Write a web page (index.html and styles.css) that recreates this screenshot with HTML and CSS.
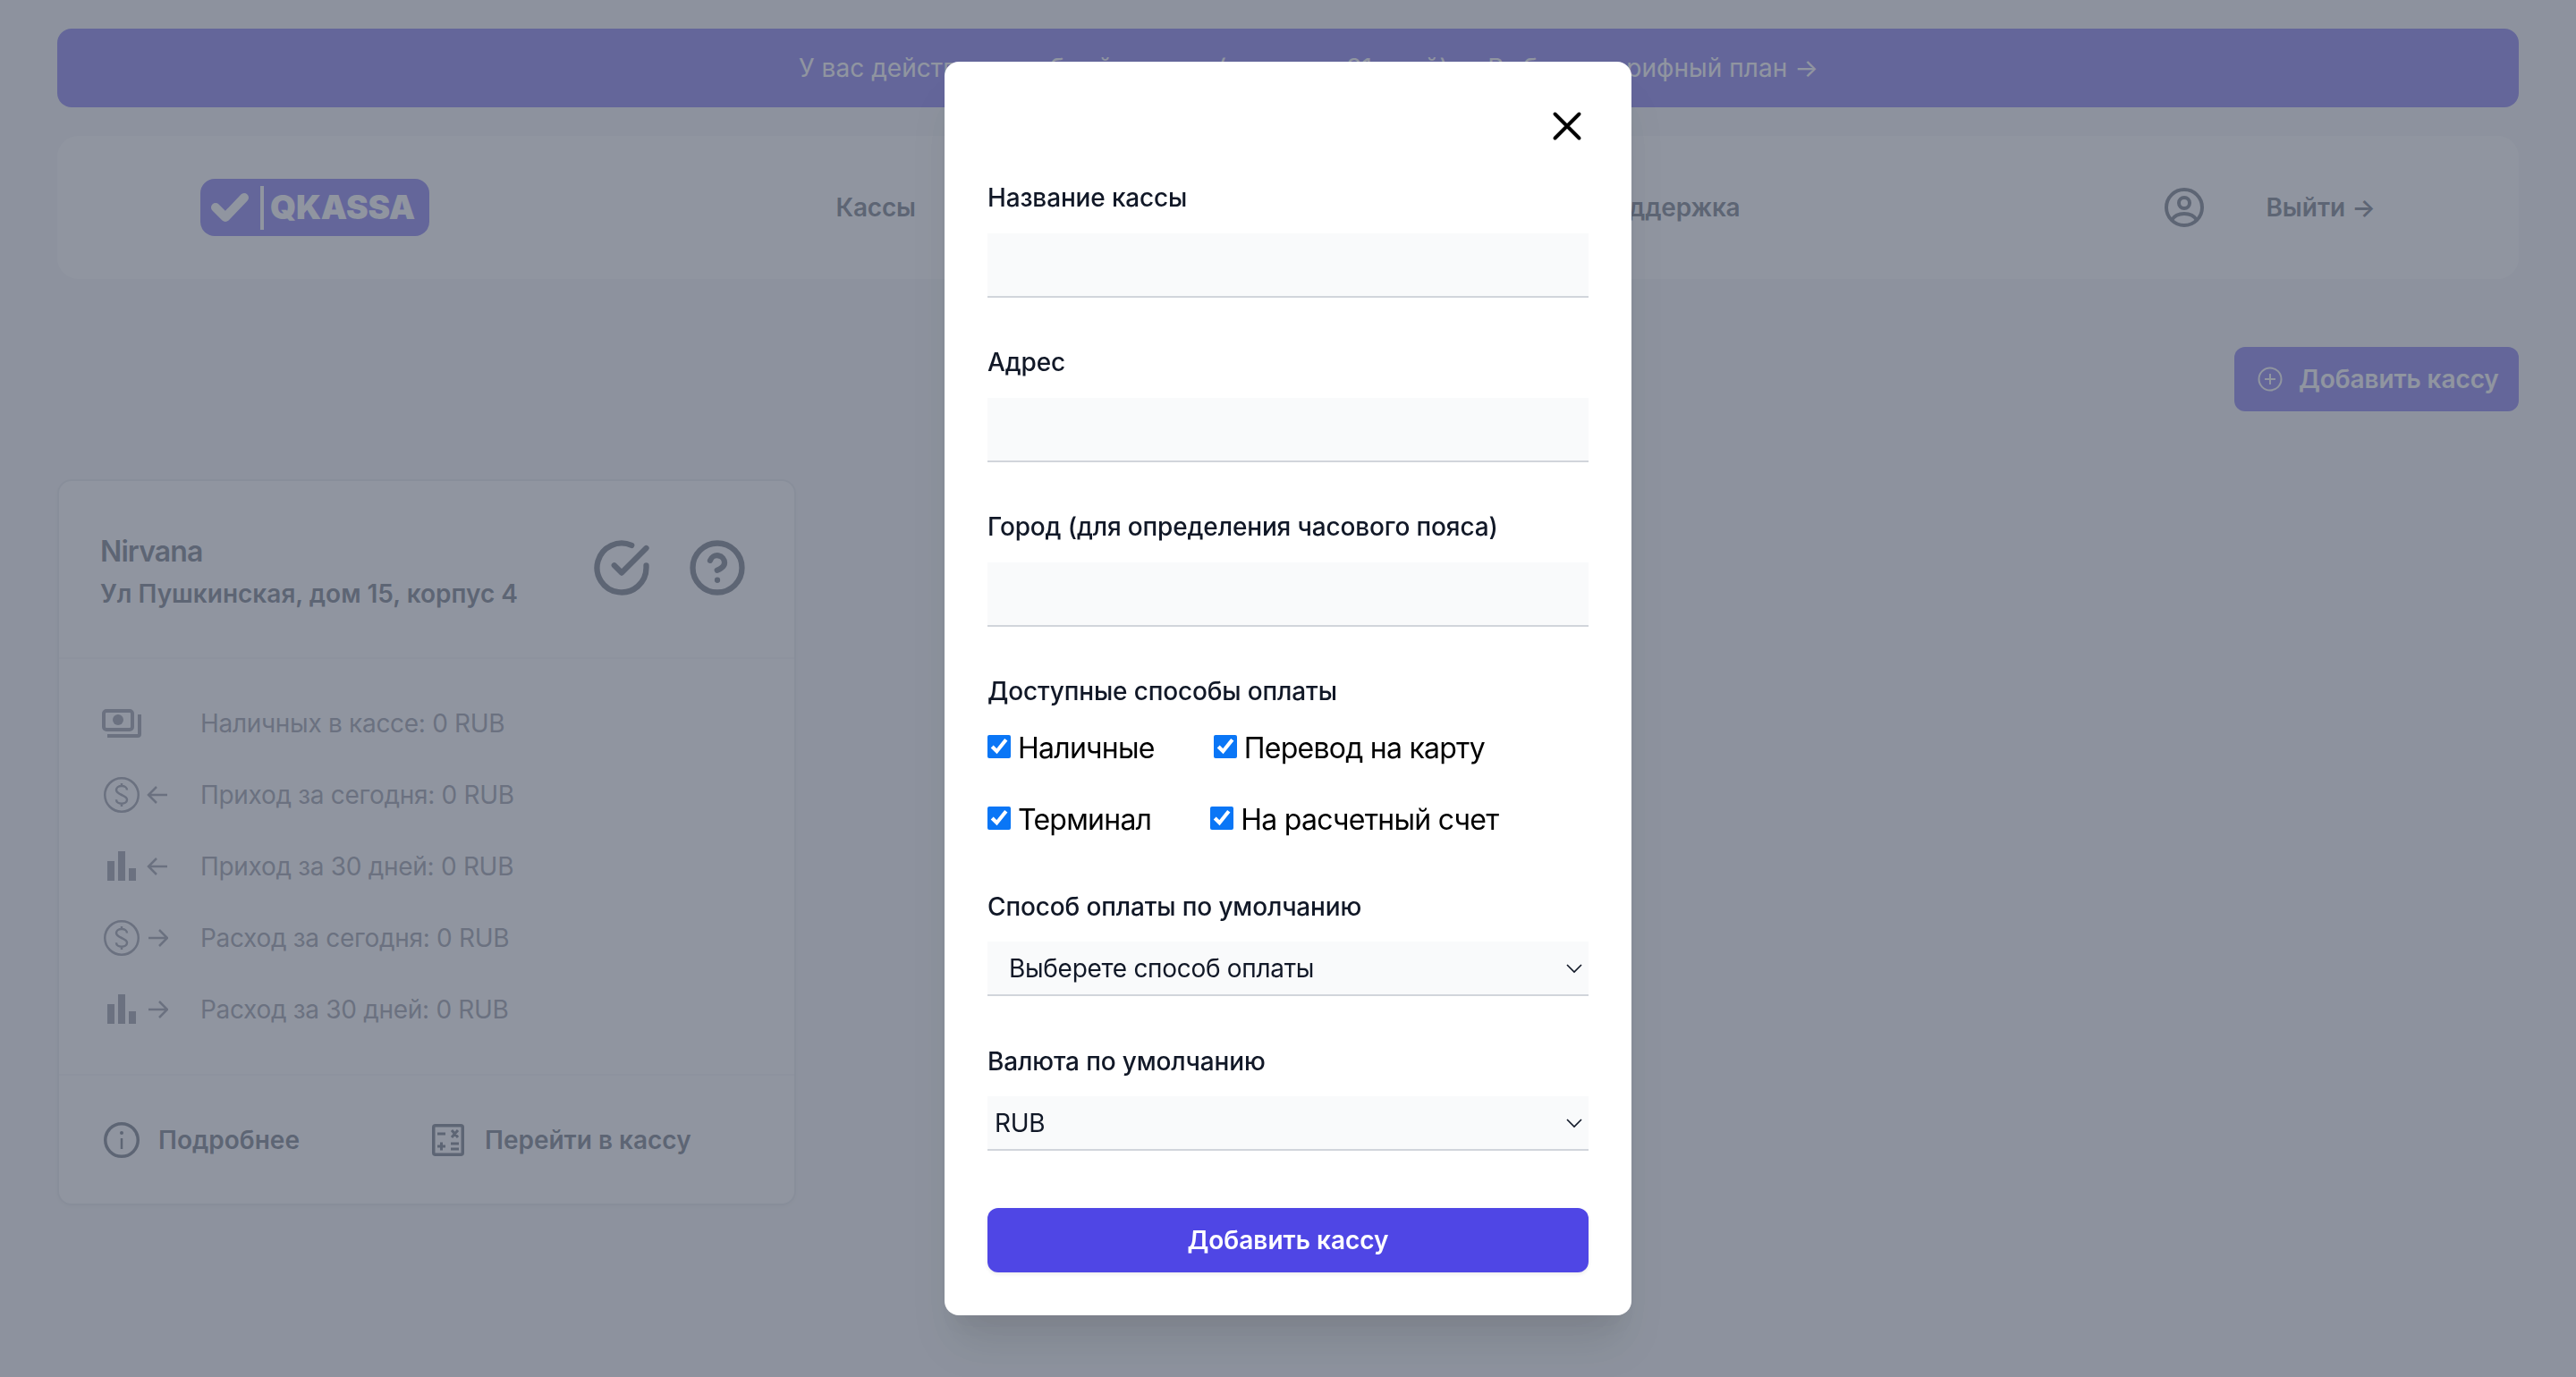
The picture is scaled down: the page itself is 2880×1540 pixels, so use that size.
FILE: index.html
```html
<!DOCTYPE html>
<html lang="ru">
<head>
    <meta charset="UTF-8">
    <meta name="viewport" content="width=device-width, initial-scale=1.0">
    <title>QKASSA</title>
    <link rel="stylesheet" href="styles.css">
</head>
<body>
    <div class="page">
        <div class="banner">У вас действует пробный период (осталось 31 дней) — Выбрать тарифный план →</div>

        <nav class="nav">
            <a class="logo">
                <svg class="logo-check" viewBox="0 0 44 34"><path d="M6 17l11 11L38 6" fill="none" stroke="#fff" stroke-width="10" stroke-linecap="round" stroke-linejoin="round"/></svg>
                <span class="logo-line"></span>
                <span class="logo-text">QKASSA</span>
            </a>
            <div class="nav-links">
                <a>Кассы</a>
                <a>Поддержка</a>
            </div>
            <div class="nav-user">
                <svg class="icon-user" viewBox="0 0 44 44" fill="none" stroke="#374151" stroke-width="4"><circle cx="22" cy="22" r="20"/><circle cx="22" cy="17" r="6"/><path d="M8 36c3-5 8-7 14-7s11 2 14 7"/></svg>
                <a>Выйти →</a>
            </div>
        </nav>

        <div class="toolbar">
            <button class="btn-add" type="button">
                <svg class="icon-plus" viewBox="0 0 28 28" fill="none" stroke="#fff" stroke-width="2"><circle cx="14" cy="14" r="12.5"/><path d="M14 8v12M8 14h12"/></svg>
                Добавить кассу
            </button>
        </div>

        <div class="card">
            <div class="card-head">
                <div>
                    <div class="card-name">Nirvana</div>
                    <div class="card-address">Ул Пушкинская, дом 15, корпус 4</div>
                </div>
                <div class="card-actions">
                    <svg class="icon-action" viewBox="0 0 24 24" fill="none" stroke="#374151" stroke-width="2.3" stroke-linecap="round" stroke-linejoin="round"><path d="M22 11.08V12a10 10 0 1 1-5.93-9.14"/><polyline points="22 4 12 14.01 9 11.01"/></svg>
                    <svg class="icon-action" viewBox="0 0 24 24" fill="none" stroke="#374151" stroke-width="2.3" stroke-linecap="round" stroke-linejoin="round"><circle cx="12" cy="12" r="10"/><path d="M9.09 9a3 3 0 0 1 5.83 1c0 2-3 3-3 3"/><line x1="12" y1="17" x2="12.01" y2="17"/></svg>
                </div>
            </div>

            <ul class="stats">
                <li>
                    <span class="stat-icon">
                        <svg class="icon-stat" viewBox="0 0 74 40" fill="none" stroke="#6b7280" stroke-width="4"><rect x="2" y="6" width="32" height="21" rx="3"/><circle cx="18" cy="16" r="6" fill="#6b7280" stroke="none"/><path d="M42 10v22a2 2 0 0 1-2 2H6"/></svg>
                    </span>
                    Наличных в кассе: 0 RUB
                </li>
                <li>
                    <span class="stat-icon">
                        <svg class="icon-stat" viewBox="0 0 74 40" fill="none" stroke="#6b7280" stroke-width="2.5"><circle cx="22" cy="20" r="18.75"/><path d="M28 14.5c0-2.8-2.7-4.500-6-4.500s-6 1.800-6 4.500 2.700 4 6 5.500 6 2.500 6 5.200-2.700 4.500-6 4.500-6-1.800-6-4.500M22 7v3M22 30v3"/><path d="M73 20H52M61 11l-9 9 9 9"/></svg>
                    </span>
                    Приход за сегодня: 0 RUB
                </li>
                <li>
                    <span class="stat-icon">
                        <svg class="icon-stat" viewBox="0 0 74 40" fill="none" stroke="#6b7280" stroke-width="2.5"><rect x="6" y="14" width="8" height="22" fill="#6b7280" stroke="none"/><rect x="18" y="3" width="8" height="33" fill="#6b7280" stroke="none"/><rect x="30" y="22" width="8" height="14" fill="#6b7280" stroke="none"/><path d="M73 20H52M61 11l-9 9 9 9"/></svg>
                    </span>
                    Приход за 30 дней: 0 RUB
                </li>
                <li>
                    <span class="stat-icon">
                        <svg class="icon-stat" viewBox="0 0 74 40" fill="none" stroke="#6b7280" stroke-width="2.5"><circle cx="22" cy="20" r="18.75"/><path d="M28 14.5c0-2.8-2.7-4.500-6-4.500s-6 1.800-6 4.500 2.700 4 6 5.500 6 2.500 6 5.200-2.700 4.500-6 4.500-6-1.800-6-4.500M22 7v3M22 30v3"/><path d="M52 20h21M64 11l9 9-9 9"/></svg>
                    </span>
                    Расход за сегодня: 0 RUB
                </li>
                <li>
                    <span class="stat-icon">
                        <svg class="icon-stat" viewBox="0 0 74 40" fill="none" stroke="#6b7280" stroke-width="2.5"><rect x="6" y="14" width="8" height="22" fill="#6b7280" stroke="none"/><rect x="18" y="3" width="8" height="33" fill="#6b7280" stroke="none"/><rect x="30" y="22" width="8" height="14" fill="#6b7280" stroke="none"/><path d="M52 20h21M64 11l9 9-9 9"/></svg>
                    </span>
                    Расход за 30 дней: 0 RUB
                </li>
            </ul>

            <div class="card-foot">
                <a class="foot-link foot-more">
                    <svg class="icon-info" viewBox="0 0 40 40" fill="none" stroke="#374151" stroke-width="3.5"><circle cx="20" cy="20" r="18.250"/><path d="M20 18v12" stroke-width="2.500"/><circle cx="20" cy="12" r="2" fill="#374151" stroke="none"/></svg>
                    Подробнее
                </a>
                <a class="foot-link foot-go">
                    <svg class="icon-calc" viewBox="0 0 36 36" fill="none" stroke="#374151" stroke-width="3.500"><rect x="1.750" y="1.750" width="32.500" height="32.500" rx="2"/><path stroke-width="3" d="M6 11h9M22 7l7 8M29 7l-7 8M6 25h9M10.500 20.500v9M21 22h9M21 28h9"/></svg>
                    Перейти в кассу
                </a>
            </div>
        </div>
    </div>

    <div class="overlay">
        <form class="modal">
            <div class="modal-top">
                <button class="modal-close" type="button" aria-label="Закрыть">
                    <svg viewBox="0 0 48 48" fill="none" stroke="#000" stroke-width="4" stroke-linecap="round"><path d="M10.500 10.500l27 27M37.500 10.500l-27 27"/></svg>
                </button>
            </div>

            <label class="field-label" for="name">Название кассы</label>
            <input class="field-input" type="text" id="name">

            <label class="field-label field-next" for="address">Адрес</label>
            <input class="field-input" type="text" id="address">

            <label class="field-label field-next" for="city">Город (для определения часового пояса)</label>
            <input class="field-input" type="text" id="city">

            <div class="field-label field-next">Доступные способы оплаты</div>
            <div class="checks">
                <label class="check"><input type="checkbox" checked>Наличные</label>
                <label class="check"><input type="checkbox" checked>Перевод на карту</label>
            </div>
            <div class="checks">
                <label class="check"><input type="checkbox" checked>Терминал</label>
                <label class="check"><input type="checkbox" checked>На расчетный счет</label>
            </div>

            <label class="field-label field-after-checks" for="method">Способ оплаты по умолчанию</label>
            <select class="field-select select-method" id="method">
                <option>Выберете способ оплаты</option>
            </select>

            <label class="field-label field-after-select" for="currency">Валюта по умолчанию</label>
            <select class="field-select" id="currency">
                <option>RUB</option>
            </select>

            <button class="btn-submit" type="button">Добавить кассу</button>
        </form>
    </div>
</body>
</html>
```

FILE: styles.css
```css
* {
    box-sizing: border-box;
}

body {
    margin: 0;
    background-color: #f3f4f6;
    font-family: Inter, "Noto Sans", sans-serif;
    font-size: 28px;
    line-height: 40px;
    color: #111827;
}

.page {
    height: 1540px;
    padding: 32px 64px;
    overflow: hidden;
}

.banner {
    height: 88px;
    line-height: 88px;
    padding-left: 46px;
    border-radius: 16px;
    background-color: #4f46e5;
    color: #fff;
    letter-spacing: 0.05px;
    text-align: center;
}

.nav {
    display: grid;
    grid-template-columns: 1fr auto 1fr;
    align-items: center;
    height: 160px;
    margin-top: 32px;
    padding: 0 160px;
    border-radius: 24px;
    background-color: #fff;
    font-weight: 600;
    color: #374151;
}

.logo {
    display: flex;
    align-items: center;
    width: 256px;
    height: 64px;
    padding-left: 11px;
    border-radius: 16px;
    background-color: #4f46e5;
    color: #fff;
}

.logo-check {
    width: 44px;
    height: 34px;
}

.logo-line {
    width: 4px;
    height: 49px;
    margin: 0 7px 0 12px;
    background-color: #fff;
}

.logo-text {
    font-size: 37px;
    font-weight: 900;
    letter-spacing: -0.2px;
}

.nav-links {
    display: flex;
    justify-content: space-between;
    width: 1011px;
    letter-spacing: -0.2px;
}

.nav-user {
    display: flex;
    align-items: center;
    justify-content: flex-end;
    gap: 69px;
}

.icon-user {
    width: 44px;
    height: 44px;
}

.toolbar {
    display: flex;
    justify-content: flex-end;
    margin-top: 76px;
}

.btn-add {
    display: flex;
    align-items: center;
    gap: 18px;
    width: 318px;
    height: 72px;
    padding: 0 0 0 26px;
    border: none;
    border-radius: 12px;
    background-color: #4f46e5;
    color: #fff;
    font: 600 28px/40px Inter, sans-serif;
    letter-spacing: -0.1px;
}

.icon-plus {
    width: 28px;
    height: 28px;
}

.card {
    width: 826px;
    height: 812px;
    margin-top: 76px;
    border: 2px solid #dfe2e7;
    border-radius: 16px;
    background-color: #fff;
    box-shadow: 0 2px 4px rgba(0, 0, 0, 0.05);
}

.card-head {
    display: flex;
    justify-content: space-between;
    height: 199px;
    padding: 55px 53px 0 46px;
    border-bottom: 2px solid #f3f4f6;
    color: #374151;
}

.card-name {
    font-size: 32px;
    line-height: 48px;
    font-weight: 600;
    letter-spacing: -0.9px;
}

.card-address {
    margin-top: 3px;
    font-weight: 600;
}

.card-actions {
    display: flex;
    gap: 41px;
    margin-top: 9px;
}

.icon-action {
    width: 66px;
    height: 66px;
}

.stats {
    display: flex;
    flex-direction: column;
    gap: 40px;
    height: 466px;
    margin: 0;
    padding: 52px 48px;
    border-bottom: 2px solid #f3f4f6;
    list-style: none;
    color: #6b7280;
    letter-spacing: -0.3px;
}

.stats li {
    display: flex;
    align-items: center;
    height: 40px;
}

.stat-icon {
    display: flex;
    width: 110px;
}

.icon-stat {
    width: 74px;
    height: 40px;
}

.card-foot {
    display: flex;
    align-items: center;
    height: 143px;
    padding-left: 50px;
    font-weight: 600;
    color: #374151;
}

.foot-link {
    display: flex;
    align-items: center;
}

.foot-more {
    gap: 21px;
    width: 367px;
}

.foot-go {
    gap: 23px;
}

.icon-info {
    width: 40px;
    height: 40px;
}

.icon-calc {
    width: 36px;
    height: 36px;
}

.overlay {
    position: fixed;
    inset: 0;
    display: flex;
    align-items: center;
    justify-content: center;
    background-color: rgba(107, 114, 128, 0.75);
}

.modal {
    display: flex;
    flex-direction: column;
    width: 768px;
    padding: 48px;
    border-radius: 16px;
    background-color: #fff;
    box-shadow: 0 40px 50px -10px rgba(0, 0, 0, 0.1), 0 20px 20px -10px rgba(0, 0, 0, 0.04);
}

.modal-top {
    display: flex;
    justify-content: flex-end;
    margin-bottom: 36px;
}

.modal-close {
    width: 48px;
    height: 48px;
    padding: 0;
    border: none;
    background: none;
}

.field-label {
    display: block;
    font-weight: 500;
    letter-spacing: -0.15px;
}

.field-next {
    margin-top: 52px;
}

.field-after-checks {
    margin-top: 54px;
}

.field-after-select {
    margin-top: 53px;
}

.field-input {
    height: 72px;
    margin-top: 20px;
    border: none;
    border-bottom: 2px solid #d1d5db;
    border-radius: 0;
    background-color: #f9fafb;
}

.checks {
    display: flex;
    gap: 66px;
    margin-top: 32px;
}

.field-label + .checks {
    margin-top: 19px;
}

.check {
    display: flex;
    align-items: center;
    gap: 8px;
    height: 48px;
    padding-top: 2px;
    font-size: 32px;
    line-height: 48px;
    color: #000;
    letter-spacing: -0.75px;
}

.check input {
    width: 26px;
    height: 26px;
    margin: 0 0 4px;
    accent-color: #0a76f6;
}

.field-select {
    appearance: none;
    height: 61px;
    margin-top: 19px;
    padding: 0 8px;
    border: none;
    border-bottom: 2px solid #d1d5db;
    border-radius: 0;
    background-color: #f9fafb;
    background-image: url("data:image/svg+xml,%3Csvg xmlns='http://www.w3.org/2000/svg' width='20' height='20' fill='none' stroke='%23111827' stroke-width='1.6'%3E%3Cpath d='M2 6l8 8 8-8'/%3E%3C/svg%3E");
    background-position: right 6px center;
    background-repeat: no-repeat;
    color: #111827;
    font: 400 28px/40px Inter, sans-serif;
    letter-spacing: -0.3px;
}

.select-method {
    padding-left: 24px;
}

.btn-submit {
    height: 72px;
    margin-top: 64px;
    border: none;
    border-radius: 12px;
    background-color: #4f46e5;
    box-shadow: 0 2px 4px rgba(0, 0, 0, 0.08);
    color: #fff;
    font: 600 28px/40px Inter, sans-serif;
}
```
